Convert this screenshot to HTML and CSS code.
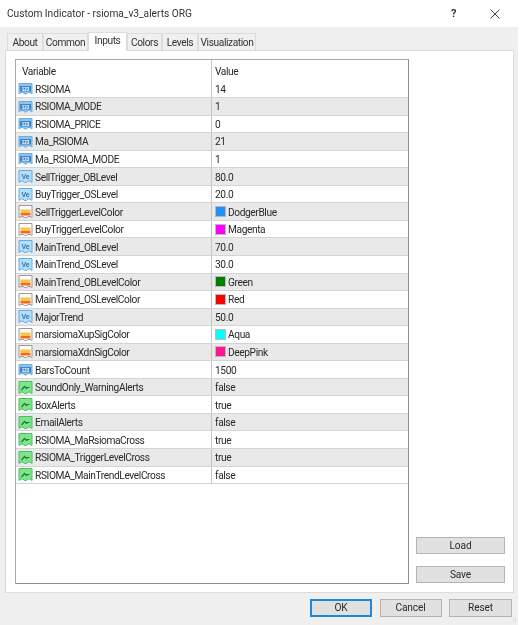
FILE: index.html
```html
<!DOCTYPE html>
<html lang="en">
<head>
<meta charset="utf-8">
<title>Custom Indicator</title>
<link rel="stylesheet" href="styles.css">
</head>
<body>
<svg class="defs" width="0" height="0" aria-hidden="true">
  <defs>
    <symbol id="i-int" viewBox="0 0 15 15">
      <path d="M1 2.500h13v10.500l-2-1.500h-2l-1.500 1.500h-2l-1.500-1.500h-2l-2 1.500z" fill="#8fc4ee" stroke="#6aaee3" stroke-width="1"/>
      <rect x="2" y="5" width="11" height="5.500" fill="#3f86c8"/>
      <text x="7.500" y="9.600" class="ico-t" fill="#fff">123</text>
    </symbol>
    <symbol id="i-dbl" viewBox="0 0 15 15">
      <path d="M1 1.500h13v12l-2-1.500h-2l-1.500 1.500h-2l-1.500-1.500h-2l-2 1.500z" fill="#b5def8" stroke="#62ade6" stroke-width="1"/>
      <text x="7.500" y="10" class="ico-v" fill="#2f6fb5">Ve</text>
    </symbol>
    <symbol id="i-col" viewBox="0 0 15 15">
      <path d="M1 1.500h13v12l-2-1h-2l-1.500 1h-2l-1.500-1h-2l-2 1z" fill="#fbfbfb" stroke="#9a9a9a" stroke-width="1"/>
      <rect x="2.500" y="5.500" width="10" height="3.500" fill="#f8c44a"/>
      <rect x="2.500" y="9" width="10" height="2.500" fill="#f26a1b"/>
    </symbol>
    <symbol id="i-bool" viewBox="0 0 15 15">
      <path d="M1 1.500h13v12l-2-1.500h-2l-1.500 1.500h-2l-1.500-1.500h-2l-2 1.500z" fill="#7fe58c" stroke="#4cc060" stroke-width="1"/>
      <path d="M3.500 10l3-3.500 2 2 1-1h2" fill="none" stroke="#1c7a30" stroke-width="1.200"/>
    </symbol>
  </defs>
</svg>
<div class="dialog">
  <header class="titlebar">
    <span class="title">Custom Indicator - rsioma_v3_alerts ORG</span>
    <span class="help">?</span>
    <svg class="close" width="10" height="10" viewBox="0 0 10 10"><path d="M.5.500l9 9M9.500.500l-9 9" stroke="#444" stroke-width="1" fill="none"/></svg>
  </header>
  <nav class="tabs">
    <span class="tab w-about">About</span>
    <span class="tab w-common">Common</span>
    <span class="tab active">Inputs</span>
    <span class="tab w-colors">Colors</span>
    <span class="tab w-levels">Levels</span>
    <span class="tab w-vis">Visualization</span>
  </nav>
  <main class="panel">
    <section class="grid">
      <div class="head"><span class="c1">Variable</span><span class="c2">Value</span></div>
      <div class="row"><span class="c1"><svg class="ico"><use href="#i-int"/></svg>RSIOMA</span><span class="c2">14</span></div>
      <div class="row"><span class="c1"><svg class="ico"><use href="#i-int"/></svg>RSIOMA_MODE</span><span class="c2">1</span></div>
      <div class="row"><span class="c1"><svg class="ico"><use href="#i-int"/></svg>RSIOMA_PRICE</span><span class="c2">0</span></div>
      <div class="row"><span class="c1"><svg class="ico"><use href="#i-int"/></svg>Ma_RSIOMA</span><span class="c2">21</span></div>
      <div class="row"><span class="c1"><svg class="ico"><use href="#i-int"/></svg>Ma_RSIOMA_MODE</span><span class="c2">1</span></div>
      <div class="row"><span class="c1"><svg class="ico"><use href="#i-dbl"/></svg>SellTrigger_OBLevel</span><span class="c2">80.0</span></div>
      <div class="row"><span class="c1"><svg class="ico"><use href="#i-dbl"/></svg>BuyTrigger_OSLevel</span><span class="c2">20.0</span></div>
      <div class="row"><span class="c1"><svg class="ico"><use href="#i-col"/></svg>SellTriggerLevelColor</span><span class="c2"><i class="sw dodger"></i>DodgerBlue</span></div>
      <div class="row"><span class="c1"><svg class="ico"><use href="#i-col"/></svg>BuyTriggerLevelColor</span><span class="c2"><i class="sw magenta"></i>Magenta</span></div>
      <div class="row"><span class="c1"><svg class="ico"><use href="#i-dbl"/></svg>MainTrend_OBLevel</span><span class="c2">70.0</span></div>
      <div class="row"><span class="c1"><svg class="ico"><use href="#i-dbl"/></svg>MainTrend_OSLevel</span><span class="c2">30.0</span></div>
      <div class="row"><span class="c1"><svg class="ico"><use href="#i-col"/></svg>MainTrend_OBLevelColor</span><span class="c2"><i class="sw green"></i>Green</span></div>
      <div class="row"><span class="c1"><svg class="ico"><use href="#i-col"/></svg>MainTrend_OSLevelColor</span><span class="c2"><i class="sw red"></i>Red</span></div>
      <div class="row"><span class="c1"><svg class="ico"><use href="#i-dbl"/></svg>MajorTrend</span><span class="c2">50.0</span></div>
      <div class="row"><span class="c1"><svg class="ico"><use href="#i-col"/></svg>marsiomaXupSigColor</span><span class="c2"><i class="sw aqua"></i>Aqua</span></div>
      <div class="row"><span class="c1"><svg class="ico"><use href="#i-col"/></svg>marsiomaXdnSigColor</span><span class="c2"><i class="sw pink"></i>DeepPink</span></div>
      <div class="row"><span class="c1"><svg class="ico"><use href="#i-int"/></svg>BarsToCount</span><span class="c2">1500</span></div>
      <div class="row"><span class="c1"><svg class="ico"><use href="#i-bool"/></svg>SoundOnly_WarningAlerts</span><span class="c2">false</span></div>
      <div class="row"><span class="c1"><svg class="ico"><use href="#i-bool"/></svg>BoxAlerts</span><span class="c2">true</span></div>
      <div class="row"><span class="c1"><svg class="ico"><use href="#i-bool"/></svg>EmailAlerts</span><span class="c2">false</span></div>
      <div class="row"><span class="c1"><svg class="ico"><use href="#i-bool"/></svg>RSIOMA_MaRsiomaCross</span><span class="c2">true</span></div>
      <div class="row"><span class="c1"><svg class="ico"><use href="#i-bool"/></svg>RSIOMA_TriggerLevelCross</span><span class="c2">true</span></div>
      <div class="row"><span class="c1"><svg class="ico"><use href="#i-bool"/></svg>RSIOMA_MainTrendLevelCross</span><span class="c2">false</span></div>
    </section>
    <aside class="side">
      <button class="btn side-btn">Load</button>
      <button class="btn side-btn">Save</button>
    </aside>
  </main>
  <footer class="foot">
    <button class="btn foot-btn primary">OK</button>
    <button class="btn foot-btn">Cancel</button>
    <button class="btn foot-btn wide">Reset</button>
  </footer>
  <div class="grip"></div>
</div>
</body>
</html>
```
FILE: styles.css
```css
* { box-sizing: border-box; }
html, body { margin: 0; padding: 0; background: #fff; }
body {
  width: 525px;
  height: 625px;
  overflow: hidden;
  font-family: Roboto, "Liberation Sans", sans-serif;
  font-size: 10.200px;
  letter-spacing: -.4px;
  color: #2a2a2a;
}
.defs { position: absolute; }
.ico-t { font: bold 4.500px "Liberation Sans", sans-serif; text-anchor: middle; letter-spacing: 0; }
.ico-v { font: bold 7px "Liberation Sans", sans-serif; text-anchor: middle; letter-spacing: 0; }

.dialog {
  position: relative;
  width: 518px;
  height: 625px;
  background: #efefef;
  display: flex;
  flex-direction: column;
  filter: blur(.35px);
}
.titlebar {
  width: 525px;
  height: 27px;
  flex: none;
  background: #fff;
  display: flex;
  align-items: center;
  padding-left: 7px;
}
.title { font-size: 10.200px; letter-spacing: -.02px; flex: 1; color: #333; }
.help { font-weight: bold; font-size: 11px; margin-right: 34px; color: #333; }
.close { margin-right: 25px; }

.tabs {
  height: 23px;
  flex: none;
  display: flex;
  align-items: flex-end;
  padding-left: 7px;
  position: relative;
  z-index: 1;
}
.tab {
  height: 17px;
  border: 1px solid #dcdcdc;
  border-bottom: 0;
  background: #f0f0f0;
  text-align: center;
  line-height: 18px;
  color: #333;
}
.w-about { width: 36px; }
.w-common { width: 45px; }
.w-colors { width: 35px; }
.w-levels { width: 36px; }
.w-vis { width: 58px; }
.tab.active {
  width: 39px;
  height: 19px;
  margin-bottom: -1px;
  background: #fff;
  line-height: 16px;
  border-bottom: 0;
}

.panel {
  width: 509px;
  height: 543px;
  flex: none;
  margin-left: 5px;
  background: #fff;
  border: 1px solid #dcdcdc;
  padding: 8px 0 8px 9px;
  display: flex;
}
.grid {
  width: 394px;
  height: 525px;
  flex: none;
  border: 1px solid #a8a8a8;
  border-right-color: #8f8f8f;
  border-bottom-color: #8f8f8f;
  background: #fff;
}
.head, .row { display: flex; }
.head { height: 20.500px; }
.head .c1, .head .c2 { padding-top: 3px; }
.row {
  height: 17.550px;
  border-bottom: 1px solid #d4d4d4;
}
.row:nth-child(odd) { background: #e9e9e9; }
.c1 {
  width: 195px;
  flex: none;
  padding-left: 2px;
  display: flex;
  align-items: center;
  white-space: nowrap;
}
.row .c1, .row .c2 { padding-top: 1px; }
.head .c1 { padding-left: 6px; }
.c2 {
  flex: 1;
  padding-left: 3px;
  border-left: 1px solid #c4c4c4;
  display: flex;
  align-items: center;
}
.ico { width: 15px; height: 15px; margin-right: 2px; flex: none; margin-top: -1px; }
.sw {
  width: 11px;
  height: 11px;
  margin-right: 2px;
  border: 1px solid #b9b9b9;
  flex: none;
  margin-top: -1px;
}
.dodger { background: #1e90ff; }
.magenta { background: #ff00ff; }
.green { background: #008000; }
.red { background: #ff0000; }
.aqua { background: #00ffff; }
.pink { background: #ff1493; }

.side {
  margin-left: 7px;
  width: 89px;
  flex: none;
  display: flex;
  flex-direction: column;
  justify-content: flex-end;
  gap: 11.500px;
  padding-bottom: 1px;
}
.btn {
  font-family: Roboto, "Liberation Sans", sans-serif;
  font-size: 10.200px;
  letter-spacing: -.15px;
  color: #2a2a2a;
  background: #e1e1e1;
  border: 1px solid #b4b4b4;
  padding: 0;
}
.side-btn { height: 17.500px; width: 89px; }
.foot {
  flex: 1;
  display: flex;
  align-items: flex-start;
  padding: 6px 0 0 310px;
  gap: 7.500px;
}
.foot-btn { width: 62px; height: 17.500px; }
.foot-btn.wide { width: 63px; }
.primary { border: 2px solid #1e88dc; }
.grip {
  position: absolute;
  right: 1px;
  bottom: 2px;
  width: 7px;
  height: 7px;
  background: radial-gradient(circle, #b5b5b5 40%, transparent 45%) 0 0 / 2.300px 2.300px;
  clip-path: polygon(100% 0, 100% 100%, 0 100%);
}
```
